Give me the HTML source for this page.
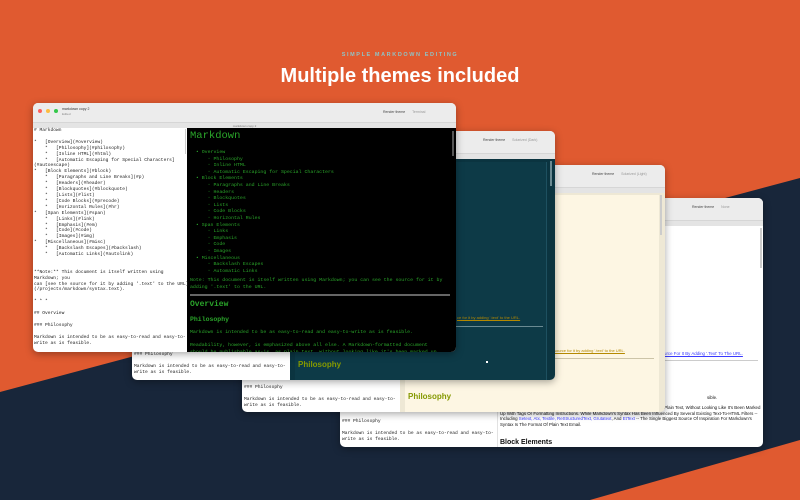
<!DOCTYPE html>
<html><head><meta charset="utf-8"><style>
*{margin:0;padding:0;box-sizing:border-box}
body{width:800px;height:500px;overflow:hidden;position:relative;background:#e05a30;font-family:"Liberation Sans",sans-serif}
.abs{position:absolute}
.win{position:absolute;border-radius:5px;overflow:hidden;background:#fff;box-shadow:0 2px 8px rgba(0,0,0,.35)}
.tb{position:absolute;left:0;right:0;top:0;height:19px;background:#ececec}
.tab{position:absolute;left:0;right:0;top:19px;height:6px;background:#e4e4e4;border-top:1px solid #d6d6d6;font-size:3px;color:#777;text-align:center;line-height:6px}
.rt{position:absolute;top:7px;font-size:3.5px;color:#444;white-space:nowrap}
.rt span{color:#999;margin-left:6px}
.mono{font-family:"Liberation Mono",monospace;white-space:pre;position:absolute}
.ed{font-size:4.6px;line-height:5.9px;color:#222}
.gr{color:#2aa52a;font-size:4.9px;line-height:6.6px}
</style></head><body>
<svg class="abs" style="left:0;top:0" width="800" height="500"><polygon points="0,392 800,178 800,440 590,500 0,500" fill="#18263a"/></svg>
<div class="abs" style="left:0;width:800px;top:52px;text-align:center;font-size:5.5px;letter-spacing:1.6px;font-weight:bold;color:#8fc3c6">SIMPLE MARKDOWN EDITING</div>
<div class="abs" style="left:0;width:800px;top:65px;text-align:center;font-size:20px;font-weight:bold;color:#fff">Multiple themes included</div>

<!-- window 4 (None) -->
<div class="win" style="left:340px;top:198px;width:423px;height:249px">
<div class="tb" style="height:22px"></div><div class="rt" style="left:352px">Render theme <span>None</span></div>
<div class="tab" style="top:22px;height:6px"></div>
<div class="abs" style="left:157px;top:28px;width:1px;height:221px;background:#e2e2e2"></div>
<div class="abs" style="left:420px;top:30px;width:2px;height:40px;background:#ccc"></div>
<div class="mono ed" style="left:2px;top:221px">### Philosophy

Markdown is intended to be as easy-to-read and easy-to-
write as is feasible.</div>
<div class="abs" style="left:324px;top:153px;font-size:4.4px;color:#3a3aff;text-decoration:underline">urce For It By Adding '.Text' To The URL.</div>
<div class="abs" style="left:160px;top:162px;width:258px;height:1px;background:#ccc"></div>
<div class="abs" style="left:367px;top:197px;font-size:4.4px;color:#111">sible.</div>
<div class="abs" style="left:160px;top:207px;width:262px;font-size:4.4px;line-height:5.6px;color:#111">&nbsp;&nbsp;&nbsp;&nbsp;&nbsp;&nbsp;&nbsp;&nbsp;&nbsp;&nbsp;&nbsp;&nbsp;&nbsp;&nbsp;&nbsp;&nbsp;&nbsp;&nbsp;&nbsp;&nbsp;&nbsp;&nbsp;&nbsp;&nbsp;&nbsp;&nbsp;&nbsp;&nbsp;&nbsp;&nbsp;&nbsp;&nbsp;&nbsp;&nbsp;&nbsp;&nbsp;&nbsp;&nbsp;&nbsp;&nbsp;&nbsp;&nbsp;&nbsp;&nbsp;&nbsp;&nbsp;&nbsp;&nbsp;&nbsp;&nbsp;&nbsp;&nbsp;&nbsp;&nbsp;&nbsp;&nbsp;&nbsp;&nbsp;&nbsp;&nbsp;&nbsp;&nbsp;&nbsp;&nbsp;&nbsp;Document Should Be Publishable As-Is, As Plain Text, Without Looking Like It's Been Marked Up With Tags Or Formatting Instructions. While Markdown's Syntax Has Been Influenced By Several Existing Text-To-HTML Filters -- Including <span style="color:#3a3aff">Setext, Atx, Textile, ReStructuredText, Grutatext</span>, And <span style="color:#3a3aff">EtText</span> -- The Single Biggest Source Of Inspiration For Markdown's Syntax Is The Format Of Plain Text Email.</div>
<div class="abs" style="left:160px;top:241px;font-size:7px;font-weight:bold;color:#111">Block Elements</div>
</div>

<!-- window 3 (Solarized Light) -->
<div class="win" style="left:242px;top:165px;width:423px;height:247px">
<div class="tb" style="height:22px"></div><div class="rt" style="left:350px">Render theme <span>Solarized (Light)</span></div>
<div class="tab" style="top:22px;height:6px"></div>
<div class="abs" style="left:158px;top:28px;width:265px;height:219px;background:#eee8d5"></div>
<div class="abs" style="left:163px;top:30px;width:254px;height:217px;background:#fdf6e3"></div>
<div class="abs" style="left:418px;top:30px;width:2px;height:40px;background:#ccc"></div>
<div class="mono ed" style="left:2px;top:220px">### Philosophy

Markdown is intended to be as easy-to-read and easy-to-
write as is feasible.</div>
<div class="abs" style="left:312px;top:183px;font-size:4px;color:#b58900;text-decoration:underline">source for it by adding '.text' to the URL.</div>
<div class="abs" style="left:166px;top:193px;width:246px;height:1px;background:#ccc4a8"></div>
<div class="abs" style="left:166px;top:227px;font-size:8px;font-weight:bold;color:#859900">Philosophy</div>
</div>

<!-- window 2 (Solarized Dark) -->
<div class="win" style="left:132px;top:131px;width:423px;height:249px">
<div class="tb" style="height:22px"></div><div class="rt" style="left:351px">Render theme <span>Solarized (Dark)</span></div>
<div class="tab" style="top:22px;height:6px"></div>
<div class="abs" style="left:158px;top:28px;width:265px;height:221px;background:#0b3440"></div>
<div class="abs" style="left:163px;top:31px;width:252px;height:218px;background:#0d3a47;border-right:1px solid #1d5060"></div>
<div class="abs" style="left:418px;top:30px;width:2px;height:25px;background:#6a8a92"></div>
<div class="mono ed" style="left:2px;top:221px">### Philosophy

Markdown is intended to be as easy-to-read and easy-to-
write as is feasible.</div>
<div class="abs" style="left:325px;top:184px;font-size:4px;color:#b58900;text-decoration:underline">ce for it by adding '.text' to the URL.</div>
<div class="abs" style="left:166px;top:195px;width:245px;height:1px;background:#6a8a92"></div>
<div class="abs" style="left:166px;top:229px;font-size:8px;font-weight:bold;color:#859900">Philosophy</div>
<div class="abs" style="left:354px;top:230px;width:2px;height:2px;background:#fff"></div>
</div>

<!-- window 1 (Terminal) -->
<div class="win" style="left:33px;top:103px;width:423px;height:249px">
<div class="tb"></div>
<div class="abs" style="left:5px;top:6px;width:4px;height:4px;border-radius:50%;background:#fc605c"></div>
<div class="abs" style="left:13px;top:6px;width:4px;height:4px;border-radius:50%;background:#fdbc40"></div>
<div class="abs" style="left:21px;top:6px;width:4px;height:4px;border-radius:50%;background:#34c84a"></div>
<div class="abs" style="left:29px;top:4px;font-size:3.5px;color:#333">markdown copy 2</div>
<div class="abs" style="left:29px;top:9px;font-size:3px;color:#888">Edited</div>
<div class="rt" style="left:350px">Render theme <span>Terminal</span></div>
<div class="tab">markdown copy 2</div>
<div class="abs" style="left:154px;top:25px;width:269px;height:224px;background:#000"></div>
<div class="abs" style="left:152px;top:26px;width:1px;height:25px;background:#ccc"></div>
<div class="abs" style="left:419px;top:28px;width:2px;height:25px;background:#555"></div>
<div class="mono ed" style="left:1px;top:25px"># Markdown

*   [Overview](#overview)
    *   [Philosophy](#philosophy)
    *   [Inline HTML](#html)
    *   [Automatic Escaping for Special Characters]
(#autoescape)
*   [Block Elements](#block)
    *   [Paragraphs and Line Breaks](#p)
    *   [Headers](#header)
    *   [Blockquotes](#blockquote)
    *   [Lists](#list)
    *   [Code Blocks](#precode)
    *   [Horizontal Rules](#hr)
*   [Span Elements](#span)
    *   [Links](#link)
    *   [Emphasis](#em)
    *   [Code](#code)
    *   [Images](#img)
*   [Miscellaneous](#misc)
    *   [Backslash Escapes](#backslash)
    *   [Automatic Links](#autolink)


**Note:** This document is itself written using
Markdown; you
can [see the source for it by adding '.text' to the URL]
(/projects/markdown/syntax.text).

* * *

## Overview

### Philosophy

Markdown is intended to be as easy-to-read and easy-to-
write as is feasible.</div>
<div class="mono" style="left:157px;top:27px;font-size:10.5px;color:#2aa52a">Markdown</div>
<div class="mono gr" style="left:157px;top:47px">  • Overview
      ◦ Philosophy
      ◦ Inline HTML
      ◦ Automatic Escaping for Special Characters
  • Block Elements
      ◦ Paragraphs and Line Breaks
      ◦ Headers
      ◦ Blockquotes
      ◦ Lists
      ◦ Code Blocks
      ◦ Horizontal Rules
  • Span Elements
      ◦ Links
      ◦ Emphasis
      ◦ Code
      ◦ Images
  • Miscellaneous
      ◦ Backslash Escapes
      ◦ Automatic Links</div>
<div class="mono gr" style="left:157px;top:175px">Note: This document is itself written using Markdown; you can see the source for it by
adding '.text' to the URL.</div>
<div class="abs" style="left:157px;top:191px;width:260px;height:2px;background:#666"></div>
<div class="mono" style="left:157px;top:197px;font-size:8px;font-weight:bold;color:#2aa52a">Overview</div>
<div class="mono" style="left:157px;top:213px;font-size:6.5px;font-weight:bold;color:#2aa52a">Philosophy</div>
<div class="mono gr" style="left:157px;top:227px">Markdown is intended to be as easy-to-read and easy-to-write as is feasible.

Readability, however, is emphasized above all else. A Markdown-formatted document
should be publishable as-is, as plain text, without looking like it's been marked up</div>
</div>
</body></html>
